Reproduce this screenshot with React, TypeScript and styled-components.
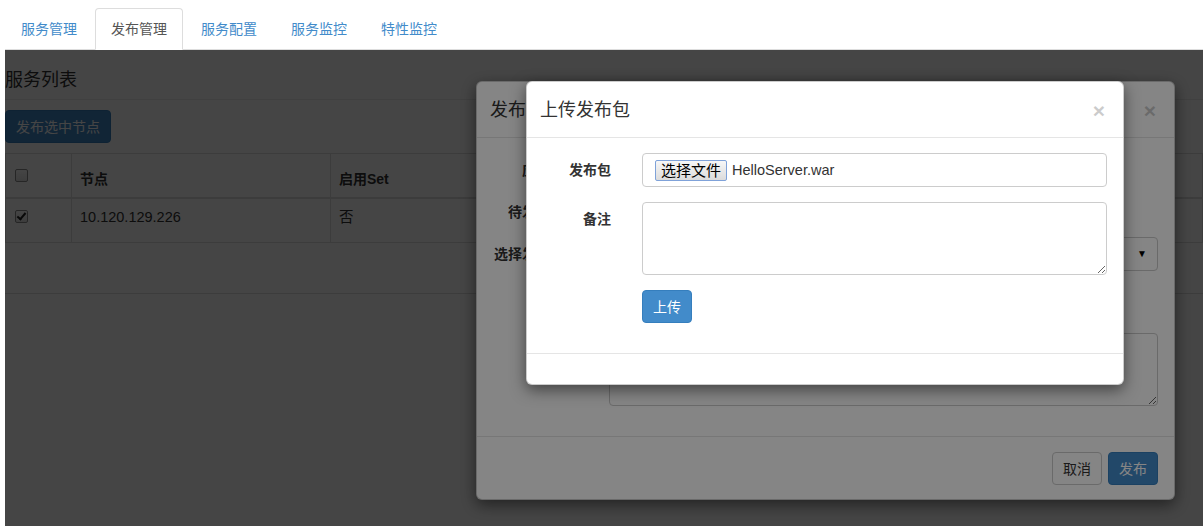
import React from 'react'
import styled, { createGlobalStyle } from 'styled-components'

const GlobalStyle = createGlobalStyle`
  * { box-sizing: border-box; }
  html, body { margin: 0; padding: 0; background: #fff; }
  body {
    font-family: 'Liberation Sans', Arial, 'Noto Sans CJK SC', sans-serif;
    font-size: 14px;
    line-height: 20px;
    color: #333;
  }
`

const Page = styled.div`
  height: 526px;
  padding-left: 5px;
  display: flex;
  flex-direction: column;
  overflow: hidden;
`

const Tabs = styled.ul`
  display: flex;
  margin: 0;
  padding: 8px 0 0 0;
  list-style: none;
  border-bottom: 1px solid #ddd;
`

const Tab = styled.li<{ $active?: boolean }>`
  margin-right: 2px;
  margin-bottom: -1px;
  padding: 10px 15px;
  line-height: 20px;
  border: 1px solid ${p => (p.$active ? '#ddd' : 'transparent')};
  border-bottom-color: transparent;
  border-radius: 4px 4px 0 0;
  background: ${p => (p.$active ? '#fff' : 'transparent')};
  color: ${p => (p.$active ? '#555' : '#428bca')};
  cursor: pointer;
`

const Content = styled.div`
  position: relative;
  flex: 1;
  overflow: hidden;
`

const Heading = styled.h3`
  margin: 0;
  padding: 17px 0 6px;
  font-size: 18px;
  font-weight: normal;
  line-height: 26px;
  border-bottom: 1px solid #eee;
`

const Toolbar = styled.div`
  padding: 10px 0;
`

const Btn = styled.button<{ $primary?: boolean }>`
  font-family: inherit;
  font-size: 14px;
  line-height: 20px;
  padding: 6px 10px 5px;
  border-radius: 4px;
  border: 1px solid ${p => (p.$primary ? '#357ebd' : '#ccc')};
  background: ${p => (p.$primary ? '#428bca' : '#fff')};
  color: ${p => (p.$primary ? '#fff' : '#333')};
  cursor: pointer;
`

const Table = styled.table`
  width: 100%;
  border-collapse: collapse;
  border: 1px solid #ddd;
`

const Th = styled.th<{ $w?: number }>`
  width: ${p => (p.$w ? `${p.$w}px` : 'auto')};
  text-align: left;
  vertical-align: bottom;
  padding: 15px 8px 8px;
  border: 1px solid #ddd;
  border-bottom: 2px solid #ddd;
  font-weight: bold;
`

const Td = styled.td`
  vertical-align: top;
  padding: 8px 8px 15px;
  border: 1px solid #ddd;
  font-size: 14.5px;
`

const Check = styled.input<{ $top: number; $bottom?: number }>`
  appearance: none;
  display: block;
  position: relative;
  width: 13px;
  height: 13px;
  margin: ${p => p.$top}px 0 ${p => p.$bottom ?? 0}px 1px;
  border: 1px solid #8f8f8f;
  border-radius: 2px;
  background: linear-gradient(#fdfdfd, #e2e2e2);
  &:checked::after {
    content: '';
    position: absolute;
    left: 3px;
    top: 0px;
    width: 3px;
    height: 7px;
    border: solid #222;
    border-width: 0 2px 2px 0;
    transform: rotate(40deg);
  }
`

const TableFoot = styled.div`
  height: 51px;
  border-bottom: 1px solid #ddd;
`

const Backdrop = styled.div`
  position: absolute;
  inset: 0;
  background: rgba(0, 0, 0, 0.48);
`

const Dialog = styled.div<{ $left: number; $width: number }>`
  position: absolute;
  top: 31px;
  left: ${p => p.$left}px;
  width: ${p => p.$width}px;
  background: #fff;
  border: 1px solid rgba(0, 0, 0, 0.2);
  border-radius: 6px;
  box-shadow: 0 5px 15px rgba(0, 0, 0, 0.5);
`

const DialogHeader = styled.div`
  display: flex;
  align-items: center;
  justify-content: space-between;
  padding: 15px 15px 14px;
  border-bottom: 1px solid #e5e5e5;
`

const DialogTitle = styled.h4`
  margin: 0 0 0 -2px;
  font-size: 18px;
  font-weight: normal;
  line-height: 26px;
`

const Close = styled.span`
  font-size: 21px;
  font-weight: bold;
  line-height: 1;
  color: #000;
  opacity: 0.2;
  margin-right: 3px;
`

const DialogBody = styled.div`
  padding: 15px 16px 30px 15px;
`

const DialogFooter = styled.div<{ $empty?: boolean }>`
  display: flex;
  justify-content: flex-end;
  gap: 6px;
  padding: ${p => (p.$empty ? '15px' : '15px 16px 14px 15px')};
  border-top: 1px solid #e5e5e5;
`

const Form = styled.div<{ $label: number }>`
  display: grid;
  grid-template-columns: ${p => p.$label}px 1fr;
  column-gap: 31px;
  row-gap: 15px;
`

const Label = styled.label`
  text-align: right;
  font-weight: bold;
  padding-top: 7px;
  white-space: nowrap;
`

const Static = styled.div`
  padding-top: 7px;
  min-height: 27px;
`

const Control = styled.div`
  display: flex;
  align-items: center;
  justify-content: space-between;
  height: 34px;
  padding: 6px 12px;
  border: 1px solid #ccc;
  border-radius: 4px;
  background: #fff;
`

const Area = styled.textarea`
  display: block;
  width: 100%;
  height: 73px;
  border: 1px solid #ccc;
  border-radius: 4px;
  font-family: inherit;
  font-size: 14px;
`

const FileButton = styled.span`
  display: inline-block;
  height: 21px;
  padding: 0 5px;
  font-size: 15px;
  line-height: 19px;
  color: #000;
  border: 1px solid #7fa2d9;
  border-radius: 2px;
  background: linear-gradient(#f7f7f7, #dcdcdc);
`

const FileName = styled.span`
  margin-left: 5px;
  font-size: 14.5px;
`

const FileRow = styled.div`
  display: flex;
  align-items: center;
`

const Caret = styled.span`
  font-size: 10px;
  color: #000;
  margin-right: -2px;
`

const Spacer = styled.div`
  height: 32px;
`

const hosts = [{ ip: '10.120.129.226', set: '否', ver: '' }]

export default function App() {
  return (
    <Page>
      <GlobalStyle />
      <Tabs>
        <Tab>服务管理</Tab>
        <Tab $active>发布管理</Tab>
        <Tab>服务配置</Tab>
        <Tab>服务监控</Tab>
        <Tab>特性监控</Tab>
      </Tabs>
      <Content>
        <Heading>服务列表</Heading>
        <Toolbar>
          <Btn $primary>发布选中节点</Btn>
        </Toolbar>
        <Table>
          <thead>
            <tr>
              <Th $w={66}>
                <Check type="checkbox" $top={0} $bottom={7} readOnly />
              </Th>
              <Th $w={259}>节点</Th>
              <Th $w={259}>启用Set</Th>
              <Th>当前版本</Th>
            </tr>
          </thead>
          <tbody>
            {hosts.map(h => (
              <tr key={h.ip}>
                <Td>
                  <Check type="checkbox" $top={3} checked readOnly />
                </Td>
                <Td>{h.ip}</Td>
                <Td>{h.set}</Td>
                <Td>{h.ver}</Td>
              </tr>
            ))}
          </tbody>
        </Table>
        <TableFoot />

        <Backdrop />
        <Dialog $left={471} $width={699}>
          <DialogHeader>
            <DialogTitle>发布服务</DialogTitle>
            <Close>×</Close>
          </DialogHeader>
          <DialogBody>
            <Form $label={86}>
              <Label>应用服务</Label>
              <Static>HelloServer</Static>
              <Label>待发布节点</Label>
              <Static>10.120.129.226</Static>
              <Label>选择发布版本</Label>
              <Control>
                <span />
                <Caret>▼</Caret>
              </Control>
              <span />
              <Spacer />
              <Label>备注</Label>
              <Area />
            </Form>
          </DialogBody>
          <DialogFooter>
            <Btn>取消</Btn>
            <Btn $primary>发布</Btn>
          </DialogFooter>
        </Dialog>

        <Backdrop />
        <Dialog $left={521} $width={598}>
          <DialogHeader>
            <DialogTitle>上传发布包</DialogTitle>
            <Close>×</Close>
          </DialogHeader>
          <DialogBody>
            <Form $label={69}>
              <Label>发布包</Label>
              <Control>
                <FileRow>
                  <FileButton>选择文件</FileButton>
                  <FileName>HelloServer.war</FileName>
                </FileRow>
              </Control>
              <Label>备注</Label>
              <Area />
              <span />
              <div>
                <Btn $primary>上传</Btn>
              </div>
            </Form>
          </DialogBody>
          <DialogFooter $empty />
        </Dialog>
      </Content>
    </Page>
  )
}
